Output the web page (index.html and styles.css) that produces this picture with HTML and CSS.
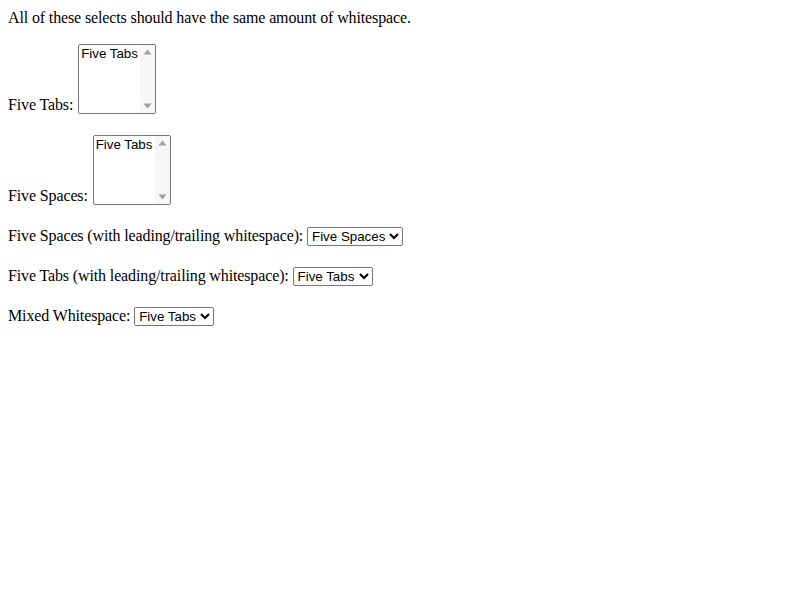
FILE: index.html
```html
<!DOCTYPE html>
<html>
<head>
<meta charset="utf-8">
<link rel="stylesheet" href="styles.css">
</head>
<body class="page">
<div class="intro">All of these selects should have the same amount of whitespace.</div>
<p class="row">Five Tabs: <span class="listbox" role="listbox" aria-label="Five Tabs"><span class="lb-inner"><span class="opts"><span class="opt" role="option">Five					Tabs</span></span><span class="sb"><svg class="arr" width="15" height="15" viewBox="0 0 15 15"><polygon points="3.5,9.5 11.5,9.5 7.5,4.5" /></svg><svg class="arr" width="15" height="15" viewBox="0 0 15 15"><polygon points="3.5,5.5 11.5,5.5 7.5,10.5" /></svg></span></span></span></p>
<p class="row">Five Spaces: <span class="listbox" role="listbox" aria-label="Five Spaces"><span class="lb-inner"><span class="opts"><span class="opt" role="option">Five     Tabs</span></span><span class="sb"><svg class="arr" width="15" height="15" viewBox="0 0 15 15"><polygon points="3.5,9.5 11.5,9.5 7.5,4.5" /></svg><svg class="arr" width="15" height="15" viewBox="0 0 15 15"><polygon points="3.5,5.5 11.5,5.5 7.5,10.5" /></svg></span></span></span></p>
<p class="row">Five Spaces (with leading/trailing whitespace): <select class="drop"><option>     Five     Spaces     </option></select></p>
<p class="row">Five Tabs (with leading/trailing whitespace): <select class="drop"><option>					Five					Tabs					</option></select></p>
<p class="row">Mixed Whitespace: <select class="drop"><option>	 	 Five 	 	Tabs 	 	</option></select></p>
</body>
</html>
```
FILE: styles.css
```css
.page {
  font-family: "Liberation Serif", serif;
  font-size: 16px;
  letter-spacing: -0.13px;
}
.intro {
  padding-top: 1px;
}
.row {
  margin: 16px 0;
}
.listbox {
  display: inline-block;
  box-sizing: border-box;
  width: 78px;
  height: 70px;
  margin: 1px 0 4px 1px;
  vertical-align: -8px;
  border: 1px solid #767676;
  border-radius: 2px;
  background: #fff;
  overflow: hidden;
  font-family: "Liberation Sans", Arial, sans-serif;
  font-size: 13.333px;
  letter-spacing: normal;
  color: #000;
}
.lb-inner {
  display: flex;
  height: 100%;
}
.opts {
  flex: 1;
  min-width: 0;
  padding-top: 1px;
}
.opt {
  display: block;
  padding: 0 2px 1px;
  white-space: nowrap;
}
.sb {
  width: 15px;
  flex: none;
  background: #f7f7f7;
  display: flex;
  flex-direction: column;
  justify-content: space-between;
}
.arr {
  display: block;
  fill: #a0a0a0;
}
.drop {
  letter-spacing: normal;
  margin: 2px 0 3px;
}
```
